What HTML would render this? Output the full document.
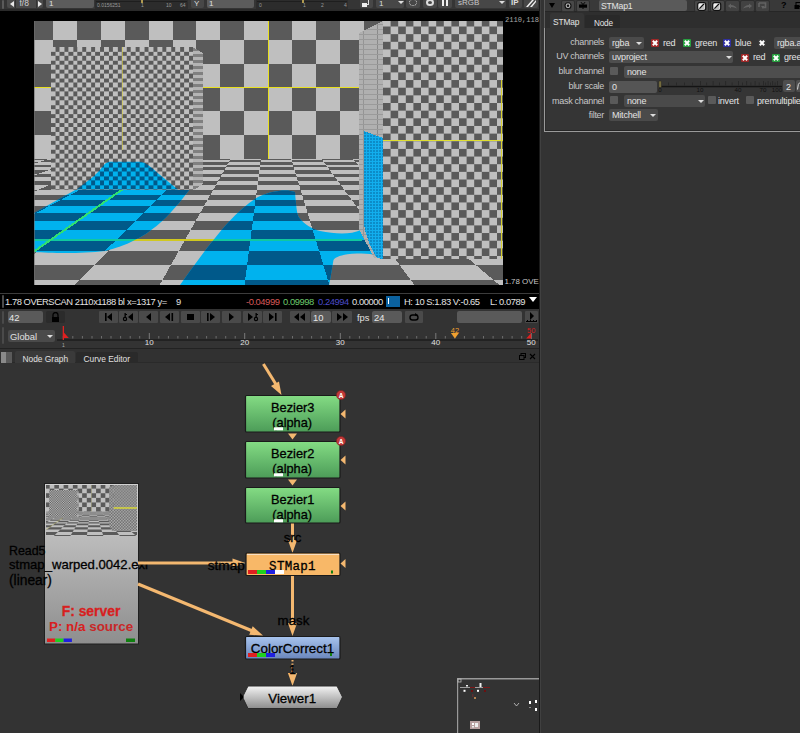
<!DOCTYPE html>
<html><head><meta charset="utf-8">
<style>
*{box-sizing:border-box;margin:0;padding:0}
html,body{width:800px;height:733px;overflow:hidden;background:#333;font-family:"Liberation Sans",sans-serif;color:#ddd}
.a{position:absolute}
.t{position:absolute;white-space:nowrap;line-height:1}
.tb{position:absolute;background:#474747;border-radius:2px}
.in{position:absolute;background:#5a5a5a;border-radius:2px}
.pb{position:absolute;top:311px;width:19px;height:12px;background:#4a4a4a;border-radius:1px}
.pb svg{position:absolute;left:0;top:0}
.node{position:absolute;border:1px solid #1c1c1c;border-radius:1px}
.lbl{position:absolute;white-space:nowrap;line-height:1;color:#000;font-size:12px}
.ck{position:absolute;width:8px;height:8px;border-radius:1px}
.ck svg{position:absolute;left:0;top:0}
.pl{position:absolute;white-space:nowrap;line-height:1;font-size:9px;letter-spacing:-0.3px;color:#c8c8c8;text-align:right}
.dd{position:absolute;background:#4a4a4a;border-radius:2px}
.ar{position:absolute;width:0;height:0;border-left:3px solid transparent;border-right:3px solid transparent;border-top:3px solid #ddd}
</style></head>
<body>
<!-- ===== VIEWER TOOLBAR ===== -->
<div class="a" style="left:0;top:0;width:539px;height:11px;background:#353535"></div>
<div class="a" style="left:0;top:9px;width:539px;height:2px;background:#2a2a2a"></div>
<div class="a" style="left:2px;top:0;width:2px;height:9px;background:#5a5a5a;border-radius:1px"></div>
<div class="tb" style="left:7px;top:-2px;width:36px;height:10px;background:#4a4a4a"></div>
<div class="a" style="left:15px;top:-2px;width:1px;height:10px;background:#333"></div>
<div class="a" style="left:36px;top:-2px;width:1px;height:10px;background:#333"></div>
<div class="a" style="left:10px;top:1px;width:0;height:0;border-top:3px solid transparent;border-bottom:3px solid transparent;border-right:4px solid #e8e8e8"></div>
<div class="a" style="left:38px;top:1px;width:0;height:0;border-top:3px solid transparent;border-bottom:3px solid transparent;border-left:4px solid #e8e8e8"></div>
<div class="t" style="left:19.5px;top:-1px;font-size:8.5px;color:#d0d0d0">f/8</div>
<div class="in" style="left:46px;top:-2px;width:48px;height:10px;background:#5c5c5c"></div>
<div class="t" style="left:49px;top:0px;font-size:8px;color:#e0e0e0">1</div>
<div class="a" style="left:95px;top:0;width:93px;height:9px;background:#2c2c2c"></div>
<div class="a" style="left:96px;top:1px;width:91px;height:1px;background:#1e1e1e"></div>
<div class="a" style="left:141px;top:0;width:2px;height:3px;background:#b09a50"></div>
<div class="t" style="left:97px;top:3px;font-size:5px;color:#999">0.0156251</div>
<div class="t" style="left:141px;top:3px;font-size:5px;color:#999">1</div>
<div class="t" style="left:166px;top:3px;font-size:5px;color:#999">10</div>
<div class="t" style="left:180px;top:3px;font-size:5px;color:#999">64</div>
<div class="tb" style="left:191px;top:-2px;width:13px;height:10px"></div>
<div class="t" style="left:194px;top:0px;font-size:8px;color:#ddd">Y</div>
<div class="in" style="left:207px;top:-2px;width:47px;height:10px;background:#5c5c5c"></div>
<div class="t" style="left:209px;top:0px;font-size:8px;color:#e0e0e0">1</div>
<div class="a" style="left:256px;top:0;width:92px;height:9px;background:#2c2c2c"></div>
<div class="a" style="left:257px;top:1px;width:90px;height:1px;background:#1e1e1e"></div>
<div class="a" style="left:302px;top:0;width:2px;height:3px;background:#b09a50"></div>
<div class="t" style="left:259px;top:3px;font-size:5px;color:#999">0</div>
<div class="t" style="left:303px;top:3px;font-size:5px;color:#999">1</div>
<div class="t" style="left:321px;top:3px;font-size:5px;color:#999">2</div>
<div class="t" style="left:344px;top:3px;font-size:5px;color:#999">4</div>
<div class="tb" style="left:360px;top:-2px;width:13px;height:10px"></div>
<div class="a" style="left:363px;top:0px;width:6px;height:5px;border:1px solid #ddd;border-top:none;border-left:none"></div>
<div class="a" style="left:362px;top:3px;width:5px;height:4px;background:#eee"></div>
<div class="dd" style="left:376px;top:-2px;width:28px;height:10px;background:#474747"></div>
<div class="t" style="left:379px;top:0px;font-size:8px;color:#ddd">1</div>
<div class="ar" style="left:398px;top:1px;border-top-color:#ddd"></div>
<div class="tb" style="left:406px;top:-2px;width:14px;height:10px"></div>
<div class="a" style="left:409px;top:-1px;width:8px;height:7px;border:1px dotted #ccc;border-radius:50%"></div>
<div class="tb" style="left:423px;top:-2px;width:14px;height:10px"></div>
<div class="a" style="left:426px;top:-1px;width:8px;height:7px;border:2px solid #ddd;border-radius:50%"></div>
<div class="tb" style="left:438px;top:-2px;width:14px;height:10px"></div>
<div class="a" style="left:442px;top:0;width:2px;height:6px;background:#eee"></div>
<div class="a" style="left:446px;top:0;width:2px;height:6px;background:#eee"></div>
<div class="dd" style="left:455px;top:-2px;width:51px;height:10px;background:#474747"></div>
<div class="t" style="left:458px;top:-1px;font-size:8px;color:#c8c8c8">sRGB</div>
<div class="ar" style="left:499px;top:1px"></div>
<div class="tb" style="left:509px;top:-2px;width:13px;height:10px"></div>
<div class="t" style="left:511px;top:-1px;font-size:8px;color:#ddd;font-weight:bold">IP</div>
<div class="tb" style="left:524px;top:-2px;width:14px;height:10px"></div>
<svg class="a" style="left:526px;top:0" width="10" height="7"><path d="M0 7 L6 0 L8 0 L2 7Z M4 7 L10 0 L10 2 L6 7Z" fill="#eee"/></svg>


<!-- ===== VIEWER BLACK ===== -->
<div class="a" style="left:0;top:11px;width:539px;height:282px;background:#000"></div>
<div class="a" style="left:0;top:293px;width:539px;height:1px;background:#3c3c3c"></div>
<div class="a" style="left:0;top:294px;width:539px;height:15px;background:#000"></div>
<div class="a" id="img" style="left:34px;top:21px;width:469px;height:264px;overflow:hidden"><svg width="469" height="264" viewBox="0 0 469 264" shape-rendering="crispEdges"><defs>
<pattern id="vfine1" x="16.6" y="25.9" width="8.9" height="8.9" patternUnits="userSpaceOnUse">
<rect width="8.9" height="8.9" fill="#5a5a5a"/><rect width="4.45" height="4.45" fill="#bfbfbf"/><rect x="4.45" y="4.45" width="4.45" height="4.45" fill="#bfbfbf"/></pattern>
<pattern id="vfine1b" x="16.6" y="25.9" width="8.9" height="8.9" patternUnits="userSpaceOnUse">
<rect width="8.9" height="8.9" fill="#00598a"/><rect width="4.45" height="4.45" fill="#00b2ee"/><rect x="4.45" y="4.45" width="4.45" height="4.45" fill="#00b2ee"/></pattern>
<pattern id="vfine2" x="349.0" y="-2.15" width="15.2" height="15.3" patternUnits="userSpaceOnUse">
<rect width="15.2" height="15.3" fill="#5a5a5a"/><rect width="7.6" height="7.65" fill="#bfbfbf"/><rect x="7.6" y="7.65" width="7.6" height="7.65" fill="#bfbfbf"/></pattern>
<pattern id="vside1" x="0" y="0" width="10" height="6" patternUnits="userSpaceOnUse">
<rect width="10" height="6" fill="#b4b4b4"/><rect y="3" width="10" height="3" fill="#808080"/></pattern>
<pattern id="vside2" x="0" y="0" width="20" height="5" patternUnits="userSpaceOnUse">
<rect width="20" height="5" fill="#b0b0b0"/><rect x="3" width="1" height="5" fill="#8a8a8a"/><rect x="9" width="1" height="5" fill="#959595"/><rect y="3" width="20" height="1" fill="#9a9a9a"/></pattern>
<pattern id="vblueside" x="0" y="0" width="3" height="3" patternUnits="userSpaceOnUse">
<rect width="3" height="3" fill="#12aeee"/><rect width="1.5" height="1.5" fill="#0c8cc8"/></pattern>
<clipPath id="vhill"><path d="M42.5,168.5 C51.0,162.0 63.0,154.0 69.0,145.0 C72.0,141.0 74.0,140.7 78.0,140.7 L106.0,140.7 C111.0,141.0 114.0,144.0 118.0,147.0 C126.0,154.0 136.0,162.0 144.0,168.5 Z"/></clipPath>
<clipPath id="vblueL"><path d="M0.0,192.0 L43.0,168.0 L156.0,168.0 C136.0,194.0 116.0,219.0 71.0,230.0 C46.0,233.0 16.0,232.0 0.0,231.0 Z"/></clipPath>
<clipPath id="vblueR"><path d="M146.0,264.0 C171.0,229.0 198.0,191.0 224.0,176.0 C238.0,169.0 254.0,168.0 261.0,171.0 C262.0,184.0 263.0,194.0 265.0,196.5 C271.0,204.0 278.0,208.0 286.0,210.0 C301.0,213.0 316.0,214.0 327.0,209.0 L349.0,209.0 L349.0,237.0 C342.0,233.0 331.0,232.0 323.0,232.6 C311.0,233.0 302.0,235.0 299.5,239.0 L295.0,265.0 Z"/></clipPath>
</defs><rect x="0" y="0" width="469" height="264" fill="#bfbfbf"/><g fill="#5a5a5a"><rect x="-4.9" y="-5.2" width="23.9" height="23.9"/><rect x="42.9" y="-5.2" width="23.9" height="23.9"/><rect x="90.7" y="-5.2" width="23.9" height="23.9"/><rect x="138.5" y="-5.2" width="23.9" height="23.9"/><rect x="186.3" y="-5.2" width="23.9" height="23.9"/><rect x="234.1" y="-5.2" width="23.9" height="23.9"/><rect x="281.9" y="-5.2" width="23.9" height="23.9"/><rect x="329.7" y="-5.2" width="23.9" height="23.9"/><rect x="377.5" y="-5.2" width="23.9" height="23.9"/><rect x="425.3" y="-5.2" width="23.9" height="23.9"/><rect x="473.1" y="-5.2" width="23.9" height="23.9"/><rect x="19.0" y="18.7" width="23.9" height="23.9"/><rect x="66.8" y="18.7" width="23.9" height="23.9"/><rect x="114.6" y="18.7" width="23.9" height="23.9"/><rect x="162.4" y="18.7" width="23.9" height="23.9"/><rect x="210.2" y="18.7" width="23.9" height="23.9"/><rect x="258.0" y="18.7" width="23.9" height="23.9"/><rect x="305.8" y="18.7" width="23.9" height="23.9"/><rect x="353.6" y="18.7" width="23.9" height="23.9"/><rect x="401.4" y="18.7" width="23.9" height="23.9"/><rect x="449.2" y="18.7" width="23.9" height="23.9"/><rect x="-4.9" y="42.6" width="23.9" height="23.9"/><rect x="42.9" y="42.6" width="23.9" height="23.9"/><rect x="90.7" y="42.6" width="23.9" height="23.9"/><rect x="138.5" y="42.6" width="23.9" height="23.9"/><rect x="186.3" y="42.6" width="23.9" height="23.9"/><rect x="234.1" y="42.6" width="23.9" height="23.9"/><rect x="281.9" y="42.6" width="23.9" height="23.9"/><rect x="329.7" y="42.6" width="23.9" height="23.9"/><rect x="377.5" y="42.6" width="23.9" height="23.9"/><rect x="425.3" y="42.6" width="23.9" height="23.9"/><rect x="473.1" y="42.6" width="23.9" height="23.9"/><rect x="19.0" y="66.5" width="23.9" height="23.9"/><rect x="66.8" y="66.5" width="23.9" height="23.9"/><rect x="114.6" y="66.5" width="23.9" height="23.9"/><rect x="162.4" y="66.5" width="23.9" height="23.9"/><rect x="210.2" y="66.5" width="23.9" height="23.9"/><rect x="258.0" y="66.5" width="23.9" height="23.9"/><rect x="305.8" y="66.5" width="23.9" height="23.9"/><rect x="353.6" y="66.5" width="23.9" height="23.9"/><rect x="401.4" y="66.5" width="23.9" height="23.9"/><rect x="449.2" y="66.5" width="23.9" height="23.9"/><rect x="-4.9" y="90.4" width="23.9" height="23.9"/><rect x="42.9" y="90.4" width="23.9" height="23.9"/><rect x="90.7" y="90.4" width="23.9" height="23.9"/><rect x="138.5" y="90.4" width="23.9" height="23.9"/><rect x="186.3" y="90.4" width="23.9" height="23.9"/><rect x="234.1" y="90.4" width="23.9" height="23.9"/><rect x="281.9" y="90.4" width="23.9" height="23.9"/><rect x="329.7" y="90.4" width="23.9" height="23.9"/><rect x="377.5" y="90.4" width="23.9" height="23.9"/><rect x="425.3" y="90.4" width="23.9" height="23.9"/><rect x="473.1" y="90.4" width="23.9" height="23.9"/><rect x="19.0" y="114.3" width="23.9" height="23.9"/><rect x="66.8" y="114.3" width="23.9" height="23.9"/><rect x="114.6" y="114.3" width="23.9" height="23.9"/><rect x="162.4" y="114.3" width="23.9" height="23.9"/><rect x="210.2" y="114.3" width="23.9" height="23.9"/><rect x="258.0" y="114.3" width="23.9" height="23.9"/><rect x="305.8" y="114.3" width="23.9" height="23.9"/><rect x="353.6" y="114.3" width="23.9" height="23.9"/><rect x="401.4" y="114.3" width="23.9" height="23.9"/><rect x="449.2" y="114.3" width="23.9" height="23.9"/><rect x="-4.9" y="138.2" width="23.9" height="23.9"/><rect x="42.9" y="138.2" width="23.9" height="23.9"/><rect x="90.7" y="138.2" width="23.9" height="23.9"/><rect x="138.5" y="138.2" width="23.9" height="23.9"/><rect x="186.3" y="138.2" width="23.9" height="23.9"/><rect x="234.1" y="138.2" width="23.9" height="23.9"/><rect x="281.9" y="138.2" width="23.9" height="23.9"/><rect x="329.7" y="138.2" width="23.9" height="23.9"/><rect x="377.5" y="138.2" width="23.9" height="23.9"/><rect x="425.3" y="138.2" width="23.9" height="23.9"/><rect x="473.1" y="138.2" width="23.9" height="23.9"/></g><rect x="0" y="138.0" width="469" height="264" fill="#bfbfbf"/><g fill="#5a5a5a"><polygon points="-25.2,330.2 88.3,330.2 104.6,301.4 3.5,301.4"/><polygon points="201.9,330.2 315.5,330.2 306.8,301.4 205.7,301.4"/><polygon points="429.1,330.2 542.7,330.2 509.0,301.4 407.9,301.4"/><polygon points="-97.6,301.4 3.5,301.4 26.5,278.2 -64.6,278.2"/><polygon points="104.6,301.4 205.7,301.4 208.7,278.2 117.6,278.2"/><polygon points="306.8,301.4 407.9,301.4 390.9,278.2 299.8,278.2"/><polygon points="26.5,278.2 117.6,278.2 128.3,259.3 45.4,259.3"/><polygon points="208.7,278.2 299.8,278.2 294.0,259.3 211.1,259.3"/><polygon points="390.9,278.2 481.9,278.2 459.8,259.3 376.9,259.3"/><polygon points="-37.5,259.3 45.4,259.3 61.1,243.5 -14.9,243.5"/><polygon points="128.3,259.3 211.1,259.3 213.2,243.5 137.2,243.5"/><polygon points="294.0,259.3 376.9,259.3 365.3,243.5 289.2,243.5"/><polygon points="459.8,259.3 542.7,259.3 517.3,243.5 441.3,243.5"/><polygon points="-90.9,243.5 -14.9,243.5 4.2,230.1 -66.0,230.1"/><polygon points="61.1,243.5 137.2,243.5 144.7,230.1 74.5,230.1"/><polygon points="213.2,243.5 289.2,243.5 285.2,230.1 214.9,230.1"/><polygon points="365.3,243.5 441.3,243.5 425.6,230.1 355.4,230.1"/><polygon points="4.2,230.1 74.5,230.1 85.9,218.6 20.7,218.6"/><polygon points="144.7,230.1 214.9,230.1 216.4,218.6 151.2,218.6"/><polygon points="285.2,230.1 355.4,230.1 346.9,218.6 281.7,218.6"/><polygon points="425.6,230.1 495.8,230.1 477.4,218.6 412.2,218.6"/><polygon points="-44.6,218.6 20.7,218.6 34.9,208.6 -26.0,208.6"/><polygon points="85.9,218.6 151.2,218.6 156.8,208.6 95.9,208.6"/><polygon points="216.4,218.6 281.7,218.6 278.6,208.6 217.7,208.6"/><polygon points="346.9,218.6 412.2,218.6 400.5,208.6 339.6,208.6"/><polygon points="477.4,218.6 542.7,218.6 522.4,208.6 461.4,208.6"/><polygon points="34.9,208.6 95.9,208.6 104.6,199.9 47.4,199.9"/><polygon points="156.8,208.6 217.7,208.6 218.9,199.9 161.7,199.9"/><polygon points="278.6,208.6 339.6,208.6 333.1,199.9 276.0,199.9"/><polygon points="400.5,208.6 461.4,208.6 447.4,199.9 390.3,199.9"/><polygon points="-9.7,199.9 47.4,199.9 58.5,192.2 4.7,192.2"/><polygon points="104.6,199.9 161.7,199.9 166.1,192.2 112.3,192.2"/><polygon points="218.9,199.9 276.0,199.9 273.7,192.2 219.9,192.2"/><polygon points="333.1,199.9 390.3,199.9 381.3,192.2 327.5,192.2"/><polygon points="447.4,199.9 504.6,199.9 488.9,192.2 435.1,192.2"/><polygon points="-49.1,192.2 4.7,192.2 17.4,185.3 -33.4,185.3"/><polygon points="58.5,192.2 112.3,192.2 119.1,185.3 68.3,185.3"/><polygon points="166.1,192.2 219.9,192.2 220.8,185.3 169.9,185.3"/><polygon points="273.7,192.2 327.5,192.2 322.4,185.3 271.6,185.3"/><polygon points="381.3,192.2 435.1,192.2 424.1,185.3 373.2,185.3"/><polygon points="17.4,185.3 68.3,185.3 77.0,179.2 28.9,179.2"/><polygon points="119.1,185.3 169.9,185.3 173.4,179.2 125.2,179.2"/><polygon points="220.8,185.3 271.6,185.3 269.7,179.2 221.5,179.2"/><polygon points="322.4,185.3 373.2,185.3 366.1,179.2 317.9,179.2"/><polygon points="424.1,185.3 474.9,185.3 462.4,179.2 414.2,179.2"/><polygon points="-19.3,179.2 28.9,179.2 39.2,173.6 -6.6,173.6"/><polygon points="77.0,179.2 125.2,179.2 130.7,173.6 85.0,173.6"/><polygon points="173.4,179.2 221.5,179.2 222.3,173.6 176.5,173.6"/><polygon points="269.7,179.2 317.9,179.2 313.8,173.6 268.0,173.6"/><polygon points="366.1,179.2 414.2,179.2 405.4,173.6 359.6,173.6"/><polygon points="462.4,179.2 510.6,179.2 496.9,173.6 451.1,173.6"/><polygon points="-52.4,173.6 -6.6,173.6 4.9,168.6 -38.7,168.6"/><polygon points="39.2,173.6 85.0,173.6 92.1,168.6 48.5,168.6"/><polygon points="130.7,173.6 176.5,173.6 179.3,168.6 135.7,168.6"/><polygon points="222.3,173.6 268.0,173.6 266.5,168.6 222.9,168.6"/><polygon points="313.8,173.6 359.6,173.6 353.7,168.6 310.1,168.6"/><polygon points="405.4,173.6 451.1,173.6 440.9,168.6 397.3,168.6"/><polygon points="4.9,168.6 48.5,168.6 57.0,164.1 15.4,164.1"/><polygon points="92.1,168.6 135.7,168.6 140.3,164.1 98.6,164.1"/><polygon points="179.3,168.6 222.9,168.6 223.5,164.1 181.9,164.1"/><polygon points="266.5,168.6 310.1,168.6 306.8,164.1 265.1,164.1"/><polygon points="353.7,168.6 397.3,168.6 390.0,164.1 348.4,164.1"/><polygon points="440.9,168.6 484.5,168.6 473.3,164.1 431.7,164.1"/><polygon points="-26.3,164.1 15.4,164.1 24.9,159.9 -14.9,159.9"/><polygon points="57.0,164.1 98.6,164.1 104.6,159.9 64.7,159.9"/><polygon points="140.3,164.1 181.9,164.1 184.2,159.9 144.4,159.9"/><polygon points="223.5,164.1 265.1,164.1 263.9,159.9 224.1,159.9"/><polygon points="306.8,164.1 348.4,164.1 343.5,159.9 303.7,159.9"/><polygon points="390.0,164.1 431.7,164.1 423.2,159.9 383.4,159.9"/><polygon points="473.3,164.1 514.9,164.1 502.8,159.9 463.0,159.9"/><polygon points="24.9,159.9 64.7,159.9 71.9,156.1 33.7,156.1"/><polygon points="104.6,159.9 144.4,159.9 148.2,156.1 110.0,156.1"/><polygon points="184.2,159.9 224.1,159.9 224.5,156.1 186.4,156.1"/><polygon points="263.9,159.9 303.7,159.9 300.9,156.1 262.7,156.1"/><polygon points="343.5,159.9 383.4,159.9 377.2,156.1 339.1,156.1"/><polygon points="423.2,159.9 463.0,159.9 453.6,156.1 415.4,156.1"/><polygon points="-4.5,156.1 33.7,156.1 41.7,152.6 5.1,152.6"/><polygon points="71.9,156.1 110.0,156.1 115.0,152.6 78.4,152.6"/><polygon points="148.2,156.1 186.4,156.1 188.4,152.6 151.7,152.6"/><polygon points="224.5,156.1 262.7,156.1 261.7,152.6 225.0,152.6"/><polygon points="300.9,156.1 339.1,156.1 335.0,152.6 298.3,152.6"/><polygon points="377.2,156.1 415.4,156.1 408.3,152.6 371.6,152.6"/><polygon points="453.6,156.1 491.8,156.1 481.6,152.6 444.9,152.6"/><polygon points="-31.6,152.6 5.1,152.6 13.9,149.4 -21.3,149.4"/><polygon points="41.7,152.6 78.4,152.6 84.4,149.4 49.2,149.4"/><polygon points="115.0,152.6 151.7,152.6 154.9,149.4 119.7,149.4"/><polygon points="188.4,152.6 225.0,152.6 225.4,149.4 190.2,149.4"/><polygon points="261.7,152.6 298.3,152.6 295.9,149.4 260.7,149.4"/><polygon points="335.0,152.6 371.6,152.6 366.4,149.4 331.2,149.4"/><polygon points="408.3,152.6 444.9,152.6 436.9,149.4 401.7,149.4"/><polygon points="13.9,149.4 49.2,149.4 56.1,146.4 22.1,146.4"/><polygon points="84.4,149.4 119.7,149.4 124.0,146.4 90.0,146.4"/><polygon points="154.9,149.4 190.2,149.4 191.9,146.4 157.9,146.4"/><polygon points="225.4,149.4 260.7,149.4 259.8,146.4 225.8,146.4"/><polygon points="295.9,149.4 331.2,149.4 327.7,146.4 293.7,146.4"/><polygon points="366.4,149.4 401.7,149.4 395.6,146.4 361.6,146.4"/><polygon points="436.9,149.4 472.2,149.4 463.5,146.4 429.5,146.4"/><polygon points="-11.8,146.4 22.1,146.4 29.7,143.6 -3.0,143.6"/><polygon points="56.1,146.4 90.0,146.4 95.2,143.6 62.5,143.6"/><polygon points="124.0,146.4 157.9,146.4 160.7,143.6 128.0,143.6"/><polygon points="191.9,146.4 225.8,146.4 226.2,143.6 193.4,143.6"/><polygon points="259.8,146.4 293.7,146.4 291.7,143.6 258.9,143.6"/><polygon points="327.7,146.4 361.6,146.4 357.1,143.6 324.4,143.6"/><polygon points="395.6,146.4 429.5,146.4 422.6,143.6 389.9,143.6"/><polygon points="463.5,146.4 497.4,146.4 488.1,143.6 455.4,143.6"/><polygon points="-35.7,143.6 -3.0,143.6 5.2,141.0 -26.4,141.0"/><polygon points="29.7,143.6 62.5,143.6 68.4,141.0 36.8,141.0"/><polygon points="95.2,143.6 128.0,143.6 131.7,141.0 100.1,141.0"/><polygon points="160.7,143.6 193.4,143.6 194.9,141.0 163.3,141.0"/><polygon points="226.2,143.6 258.9,143.6 258.1,141.0 226.5,141.0"/><polygon points="291.7,143.6 324.4,143.6 321.4,141.0 289.7,141.0"/><polygon points="357.1,143.6 389.9,143.6 384.6,141.0 353.0,141.0"/><polygon points="422.6,143.6 455.4,143.6 447.8,141.0 416.2,141.0"/><polygon points="5.2,141.0 36.8,141.0 43.4,138.5 12.9,138.5"/><polygon points="68.4,141.0 100.1,141.0 104.6,138.5 74.0,138.5"/><polygon points="131.7,141.0 163.3,141.0 165.7,138.5 135.1,138.5"/><polygon points="194.9,141.0 226.5,141.0 226.8,138.5 196.3,138.5"/><polygon points="258.1,141.0 289.7,141.0 288.0,138.5 257.4,138.5"/><polygon points="321.4,141.0 353.0,141.0 349.1,138.5 318.5,138.5"/><polygon points="384.6,141.0 416.2,141.0 410.2,138.5 379.7,138.5"/><polygon points="447.8,141.0 479.4,141.0 471.3,138.5 440.8,138.5"/><polygon points="-17.7,138.5 12.9,138.5 14.6,138.0 -15.7,138.0"/><polygon points="43.4,138.5 74.0,138.5 75.3,138.0 44.9,138.0"/><polygon points="104.6,138.5 135.1,138.5 135.9,138.0 105.6,138.0"/><polygon points="165.7,138.5 196.3,138.5 196.6,138.0 166.2,138.0"/><polygon points="226.8,138.5 257.4,138.5 257.2,138.0 226.9,138.0"/><polygon points="288.0,138.5 318.5,138.5 317.9,138.0 287.6,138.0"/><polygon points="349.1,138.5 379.7,138.5 378.5,138.0 348.2,138.0"/><polygon points="410.2,138.5 440.8,138.5 439.2,138.0 408.9,138.0"/><polygon points="471.3,138.5 501.9,138.5 499.8,138.0 469.5,138.0"/></g><g clip-path="url(#vblueL)"><rect x="0" y="138.0" width="469" height="264" fill="#00b2ee"/><g fill="#00598a"><polygon points="-95.0,243.5 -18.9,243.5 0.5,230.1 -69.7,230.1"/><polygon points="57.1,243.5 133.1,243.5 141.0,230.1 70.8,230.1"/><polygon points="0.5,230.1 70.8,230.1 82.5,218.6 17.2,218.6"/><polygon points="141.0,230.1 211.2,230.1 213.0,218.6 147.7,218.6"/><polygon points="-48.0,218.6 17.2,218.6 31.7,208.6 -29.2,208.6"/><polygon points="82.5,218.6 147.7,218.6 153.6,208.6 92.6,208.6"/><polygon points="31.7,208.6 92.6,208.6 101.5,199.9 44.4,199.9"/><polygon points="153.6,208.6 214.5,208.6 215.8,199.9 158.7,199.9"/><polygon points="-12.7,199.9 44.4,199.9 55.6,192.2 1.8,192.2"/><polygon points="101.5,199.9 158.7,199.9 163.2,192.2 109.4,192.2"/><polygon points="-52.0,192.2 1.8,192.2 14.7,185.3 -36.1,185.3"/><polygon points="55.6,192.2 109.4,192.2 116.4,185.3 65.6,185.3"/><polygon points="14.7,185.3 65.6,185.3 74.5,179.2 26.3,179.2"/><polygon points="116.4,185.3 167.2,185.3 170.8,179.2 122.7,179.2"/><polygon points="-21.8,179.2 26.3,179.2 36.8,173.6 -9.0,173.6"/><polygon points="74.5,179.2 122.7,179.2 128.3,173.6 82.5,173.6"/><polygon points="-54.8,173.6 -9.0,173.6 2.6,168.6 -41.0,168.6"/><polygon points="36.8,173.6 82.5,173.6 89.8,168.6 46.2,168.6"/><polygon points="128.3,173.6 174.1,173.6 177.0,168.6 133.4,168.6"/><polygon points="2.6,168.6 46.2,168.6 54.8,164.1 13.2,164.1"/><polygon points="89.8,168.6 133.4,168.6 138.0,164.1 96.4,164.1"/><polygon points="-28.5,164.1 13.2,164.1 22.8,159.9 -17.0,159.9"/><polygon points="54.8,164.1 96.4,164.1 102.5,159.9 62.6,159.9"/><polygon points="138.0,164.1 179.7,164.1 182.1,159.9 142.3,159.9"/><polygon points="22.8,159.9 62.6,159.9 69.8,156.1 31.7,156.1"/><polygon points="102.5,159.9 142.3,159.9 146.2,156.1 108.0,156.1"/><polygon points="-6.5,156.1 31.7,156.1 39.8,152.6 3.1,152.6"/><polygon points="69.8,156.1 108.0,156.1 113.1,152.6 76.4,152.6"/><polygon points="146.2,156.1 184.4,156.1 186.4,152.6 149.8,152.6"/><polygon points="-33.5,152.6 3.1,152.6 12.1,149.4 -23.2,149.4"/><polygon points="39.8,152.6 76.4,152.6 82.6,149.4 47.3,149.4"/><polygon points="113.1,152.6 149.8,152.6 153.1,149.4 117.8,149.4"/><polygon points="12.1,149.4 47.3,149.4 54.3,146.4 20.3,146.4"/><polygon points="82.6,149.4 117.8,149.4 122.2,146.4 88.2,146.4"/><polygon points="153.1,149.4 188.3,149.4 190.1,146.4 156.1,146.4"/><polygon points="-13.6,146.4 20.3,146.4 28.0,143.6 -4.7,143.6"/><polygon points="54.3,146.4 88.2,146.4 93.5,143.6 60.7,143.6"/><polygon points="122.2,146.4 156.1,146.4 159.0,143.6 126.2,143.6"/><polygon points="-37.5,143.6 -4.7,143.6 3.5,141.0 -28.1,141.0"/><polygon points="28.0,143.6 60.7,143.6 66.8,141.0 35.1,141.0"/><polygon points="93.5,143.6 126.2,143.6 130.0,141.0 98.4,141.0"/><polygon points="159.0,143.6 191.7,143.6 193.2,141.0 161.6,141.0"/><polygon points="3.5,141.0 35.1,141.0 41.8,138.5 11.3,138.5"/><polygon points="66.8,141.0 98.4,141.0 103.0,138.5 72.4,138.5"/><polygon points="130.0,141.0 161.6,141.0 164.1,138.5 133.5,138.5"/></g></g><g clip-path="url(#vblueR)"><rect x="0" y="138.0" width="469" height="264" fill="#00b2ee"/><g fill="#00598a"><polygon points="208.7,278.2 299.8,278.2 294.0,259.3 211.1,259.3"/><polygon points="128.3,259.3 211.1,259.3 213.2,243.5 137.2,243.5"/><polygon points="294.0,259.3 376.9,259.3 365.3,243.5 289.2,243.5"/><polygon points="61.1,243.5 137.2,243.5 144.7,230.1 74.5,230.1"/><polygon points="213.2,243.5 289.2,243.5 285.2,230.1 214.9,230.1"/><polygon points="144.7,230.1 214.9,230.1 216.4,218.6 151.2,218.6"/><polygon points="285.2,230.1 355.4,230.1 346.9,218.6 281.7,218.6"/><polygon points="85.9,218.6 151.2,218.6 156.8,208.6 95.9,208.6"/><polygon points="216.4,218.6 281.7,218.6 278.6,208.6 217.7,208.6"/><polygon points="346.9,218.6 412.2,218.6 400.5,208.6 339.6,208.6"/><polygon points="156.8,208.6 217.7,208.6 218.9,199.9 161.7,199.9"/><polygon points="278.6,208.6 339.6,208.6 333.1,199.9 276.0,199.9"/><polygon points="104.6,199.9 161.7,199.9 166.1,192.2 112.3,192.2"/><polygon points="218.9,199.9 276.0,199.9 273.7,192.2 219.9,192.2"/><polygon points="333.1,199.9 390.3,199.9 381.3,192.2 327.5,192.2"/><polygon points="166.1,192.2 219.9,192.2 220.8,185.3 169.9,185.3"/><polygon points="273.7,192.2 327.5,192.2 322.4,185.3 271.6,185.3"/><polygon points="119.1,185.3 169.9,185.3 173.4,179.2 125.2,179.2"/><polygon points="220.8,185.3 271.6,185.3 269.7,179.2 221.5,179.2"/><polygon points="322.4,185.3 373.2,185.3 366.1,179.2 317.9,179.2"/><polygon points="173.4,179.2 221.5,179.2 222.3,173.6 176.5,173.6"/><polygon points="269.7,179.2 317.9,179.2 313.8,173.6 268.0,173.6"/><polygon points="130.7,173.6 176.5,173.6 179.3,168.6 135.7,168.6"/><polygon points="222.3,173.6 268.0,173.6 266.5,168.6 222.9,168.6"/><polygon points="313.8,173.6 359.6,173.6 353.7,168.6 310.1,168.6"/><polygon points="179.3,168.6 222.9,168.6 223.5,164.1 181.9,164.1"/><polygon points="266.5,168.6 310.1,168.6 306.8,164.1 265.1,164.1"/><polygon points="140.3,164.1 181.9,164.1 184.2,159.9 144.4,159.9"/><polygon points="223.5,164.1 265.1,164.1 263.9,159.9 224.1,159.9"/><polygon points="306.8,164.1 348.4,164.1 343.5,159.9 303.7,159.9"/></g></g><line x1="0" y1="219" x2="328" y2="219" stroke="#d0c820" stroke-width="1.3"/><g clip-path="url(#vblueL)"><line x1="0" y1="219" x2="328" y2="219" stroke="#10c8a0" stroke-width="1.5"/></g><g clip-path="url(#vblueR)"><line x1="0" y1="219" x2="328" y2="219" stroke="#10c8a0" stroke-width="1.5"/></g><line x1="0" y1="230.5" x2="89" y2="168" stroke="#30e070" stroke-width="2"/><line x1="0" y1="66.5" x2="328" y2="66.5" stroke="#e8e020" stroke-width="1.5"/><line x1="234.5" y1="0" x2="234.5" y2="137.5" stroke="#e8e020" stroke-width="1.5"/><rect x="16.6" y="25.9" width="143.4" height="143.1" fill="url(#vfine1)"/><polygon points="159.0,26.0 169.0,32.0 169.0,163.0 159.0,169.5" fill="url(#vside1)"/><line x1="88" y1="26" x2="88" y2="129" stroke="#d8d040" stroke-width="1" opacity="0.6"/><g clip-path="url(#vhill)"><rect x="16.6" y="25.9" width="143.4" height="143.1" fill="url(#vfine1b)"/></g><rect x="349.0" y="0" width="120.0" height="238.0" fill="url(#vfine2)"/><path d="M325.0,12.0 L349.0,0.0 L349.0,238.0 L340.0,237.0 L325.0,208.0 Z" fill="url(#vside2)"/><path d="M330.0,110.0 L349.0,117.0 L349.0,238.0 L343.0,237.0 C338.0,229.0 332.0,217.0 330.0,204.0 Z" fill="url(#vblueside)"/><line x1="349.0" y1="119" x2="469" y2="119" stroke="#e0e030" stroke-width="1"/><line x1="467.5" y1="59" x2="467.5" y2="238" stroke="#d8d030" stroke-width="1"/><rect x="0" y="0" width="1" height="264" fill="#707070" opacity="0.6"/></svg></div>
<div class="a" style="left:2px;top:295px;width:2px;height:13px;background:#4a4a4a;border-radius:1px"></div>
<div class="t" style="left:5px;top:297px;font-size:9.4px;letter-spacing:-0.45px;color:#e4e4e4">1.78 OVERSCAN 2110x1188 bl</div>
<div class="t" style="left:127px;top:297px;font-size:9.4px;letter-spacing:-0.45px;color:#e4e4e4">x=1317 y=</div>
<div class="t" style="left:176px;top:297px;font-size:9.4px;letter-spacing:-0.45px;color:#e4e4e4">9</div>
<div class="t" style="left:246px;top:297px;font-size:9.4px;letter-spacing:-0.45px;color:#d85858">-0.04999</div>
<div class="t" style="left:283px;top:297px;font-size:9.4px;letter-spacing:-0.45px;color:#6cc86c">0.09998</div>
<div class="t" style="left:318px;top:297px;font-size:9.4px;letter-spacing:-0.45px;color:#4a4ac8">0.24994</div>
<div class="t" style="left:352px;top:297px;font-size:9.4px;letter-spacing:-0.45px;color:#e4e4e4">0.00000</div>
<div class="a" style="left:386px;top:296px;width:13.5px;height:11px;background:#0b62a0"></div>
<div class="a" style="left:388px;top:298px;width:1px;height:6px;background:#fff"></div>
<div class="t" style="left:404px;top:297px;font-size:9.4px;letter-spacing:-0.45px;color:#e4e4e4">H: 10 S:1.83 V:-0.65</div>
<div class="t" style="left:490px;top:297px;font-size:9.4px;letter-spacing:-0.45px;color:#e4e4e4">L: 0.0789</div>
<div class="a" style="left:529px;top:297px;width:0;height:0;border-left:4px solid transparent;border-right:4px solid transparent;border-top:5px solid #fff"></div>
<div class="t" style="left:505px;top:17px;font-size:7.1px;font-family:'Liberation Mono',monospace;color:#a8a8a8">2110,118</div>
<div class="t" style="left:504.5px;top:278px;font-size:7.9px;color:#c8c8c8">1.78 OVE</div>


<!-- ===== PLAYBACK + TIMELINE ===== -->
<div class="a" style="left:2px;top:311px;width:2px;height:13px;background:#4a4a4a;border-radius:1px"></div>
<div class="a" style="left:2px;top:327px;width:2px;height:17px;background:#4a4a4a;border-radius:1px"></div>
<div class="in" style="left:8px;top:311px;width:35px;height:12px;background:#5a5a5a"></div>
<div class="t" style="left:9px;top:313px;font-size:9.4px;color:#e8e8e8">42</div>
<div class="a" style="left:46px;top:311px;width:19px;height:12px;background:#2b2b2b;border-radius:2px"></div>
<svg class="a" style="left:51px;top:312px" width="9" height="10"><path d="M2 5 V3 A2.5 2.5 0 0 1 7 3 V5" fill="none" stroke="#000" stroke-width="1.3"/><rect x="1" y="5" width="7" height="5" fill="#000"/></svg>
<!-- transport -->
<div class="pb" style="left:99px"><svg width="19" height="12"><rect x="6" y="2" width="1.6" height="8" fill="#000"/><path d="M13 2 L8 6 L13 10Z" fill="#000"/></svg></div>
<div class="pb" style="left:119px"><svg width="19" height="12"><circle cx="6" cy="8" r="1.6" fill="none" stroke="#000" stroke-width="1.2"/><rect x="5.5" y="2" width="1.3" height="5" fill="#000"/><rect x="6" y="3" width="2" height="1" fill="#000"/><path d="M14 2 L9 6 L14 10Z" fill="#000"/></svg></div>
<div class="pb" style="left:139px"><svg width="19" height="12"><path d="M12 2 L7 6 L12 10Z" fill="#000"/></svg></div>
<div class="pb" style="left:160px"><svg width="19" height="12"><path d="M10 2 L5 6 L10 10Z" fill="#000"/><rect x="11.5" y="2" width="1.6" height="8" fill="#000"/></svg></div>
<div class="pb" style="left:181px"><svg width="19" height="12"><rect x="6" y="3" width="7" height="6" fill="#000"/></svg></div>
<div class="pb" style="left:201px"><svg width="19" height="12"><rect x="6" y="2" width="1.6" height="8" fill="#000"/><path d="M9 2 L14 6 L9 10Z" fill="#000"/></svg></div>
<div class="pb" style="left:222px"><svg width="19" height="12"><path d="M7 2 L12 6 L7 10Z" fill="#000"/></svg></div>
<div class="pb" style="left:243px"><svg width="19" height="12"><path d="M5 2 L10 6 L5 10Z" fill="#000"/><circle cx="13" cy="8" r="1.6" fill="none" stroke="#000" stroke-width="1.2"/><rect x="12.5" y="2" width="1.3" height="5" fill="#000"/><rect x="13" y="3" width="2" height="1" fill="#000"/></svg></div>
<div class="pb" style="left:263px"><svg width="19" height="12"><path d="M6 2 L11 6 L6 10Z" fill="#000"/><rect x="12" y="2" width="1.6" height="8" fill="#000"/></svg></div>
<div class="pb" style="left:290px;width:20px"><svg width="20" height="12"><path d="M9 2 L4 6 L9 10Z M15 2 L10 6 L15 10Z" fill="#000"/></svg></div>
<div class="in" style="left:311px;top:311px;width:20px;height:12px;background:#5a5a5a"></div>
<div class="t" style="left:313px;top:313px;font-size:9.4px;color:#e8e8e8">10</div>
<div class="pb" style="left:332px;width:20px"><svg width="20" height="12"><path d="M5 2 L10 6 L5 10Z M11 2 L16 6 L11 10Z" fill="#000"/></svg></div>
<div class="t" style="left:357px;top:313px;font-size:9.4px;color:#e0e0e0">fps</div>
<div class="in" style="left:372px;top:311px;width:30px;height:12px;background:#5a5a5a"></div>
<div class="t" style="left:374px;top:313px;font-size:9.4px;color:#e8e8e8">24</div>
<div class="pb" style="left:405px;width:18px"><svg width="18" height="12"><rect x="5" y="4" width="8" height="5" rx="2.5" fill="none" stroke="#000" stroke-width="1.4"/><path d="M10 2 L13 4 L10 5Z" fill="#000"/></svg></div>
<div class="in" style="left:457px;top:311px;width:65px;height:12px;background:#5a5a5a"></div>
<div class="pb" style="left:525px;width:13px"><svg width="13" height="12"><path d="M5 1 L9 5 L5 9Z" fill="#000"/><rect x="1" y="10" width="11" height="1" fill="#000"/><rect x="2" y="9" width="1" height="1" fill="#000"/><rect x="5" y="9" width="1" height="1" fill="#000"/><rect x="8" y="9" width="1" height="1" fill="#000"/><rect x="11" y="9" width="1" height="1" fill="#000"/></svg></div>
<!-- timeline -->
<div class="dd" style="left:8px;top:330px;width:47px;height:12px;background:#4a4a4a"></div>
<div class="t" style="left:10px;top:332px;font-size:9.4px;color:#e0e0e0">Global</div>
<div class="ar" style="left:47px;top:335px"></div>
<div class="a" style="left:57px;top:339px;width:481px;height:1.5px;background:#222"></div>
<svg class="a" style="left:57px;top:326px" width="481" height="22"><rect x="5.8" y="10" width="1" height="2.5" fill="#6e6e6e"/><rect x="15.3" y="10" width="1" height="2.5" fill="#6e6e6e"/><rect x="24.9" y="10" width="1" height="2.5" fill="#6e6e6e"/><rect x="34.5" y="10" width="1" height="2.5" fill="#6e6e6e"/><rect x="44.0" y="10" width="1" height="2.5" fill="#6e6e6e"/><rect x="53.5" y="10" width="1" height="2.5" fill="#6e6e6e"/><rect x="63.1" y="10" width="1" height="2.5" fill="#6e6e6e"/><rect x="72.7" y="10" width="1" height="2.5" fill="#6e6e6e"/><rect x="82.2" y="10" width="1" height="2.5" fill="#6e6e6e"/><rect x="91.8" y="7" width="1" height="6" fill="#7a7a7a"/><rect x="101.3" y="10" width="1" height="2.5" fill="#6e6e6e"/><rect x="110.9" y="10" width="1" height="2.5" fill="#6e6e6e"/><rect x="120.4" y="10" width="1" height="2.5" fill="#6e6e6e"/><rect x="129.9" y="10" width="1" height="2.5" fill="#6e6e6e"/><rect x="139.5" y="10" width="1" height="2.5" fill="#6e6e6e"/><rect x="149.1" y="10" width="1" height="2.5" fill="#6e6e6e"/><rect x="158.6" y="10" width="1" height="2.5" fill="#6e6e6e"/><rect x="168.2" y="10" width="1" height="2.5" fill="#6e6e6e"/><rect x="177.7" y="10" width="1" height="2.5" fill="#6e6e6e"/><rect x="187.2" y="7" width="1" height="6" fill="#7a7a7a"/><rect x="196.8" y="10" width="1" height="2.5" fill="#6e6e6e"/><rect x="206.4" y="10" width="1" height="2.5" fill="#6e6e6e"/><rect x="215.9" y="10" width="1" height="2.5" fill="#6e6e6e"/><rect x="225.4" y="10" width="1" height="2.5" fill="#6e6e6e"/><rect x="235.0" y="10" width="1" height="2.5" fill="#6e6e6e"/><rect x="244.6" y="10" width="1" height="2.5" fill="#6e6e6e"/><rect x="254.1" y="10" width="1" height="2.5" fill="#6e6e6e"/><rect x="263.7" y="10" width="1" height="2.5" fill="#6e6e6e"/><rect x="273.2" y="10" width="1" height="2.5" fill="#6e6e6e"/><rect x="282.8" y="7" width="1" height="6" fill="#7a7a7a"/><rect x="292.3" y="10" width="1" height="2.5" fill="#6e6e6e"/><rect x="301.9" y="10" width="1" height="2.5" fill="#6e6e6e"/><rect x="311.4" y="10" width="1" height="2.5" fill="#6e6e6e"/><rect x="321.0" y="10" width="1" height="2.5" fill="#6e6e6e"/><rect x="330.5" y="10" width="1" height="2.5" fill="#6e6e6e"/><rect x="340.1" y="10" width="1" height="2.5" fill="#6e6e6e"/><rect x="349.6" y="10" width="1" height="2.5" fill="#6e6e6e"/><rect x="359.2" y="10" width="1" height="2.5" fill="#6e6e6e"/><rect x="368.7" y="10" width="1" height="2.5" fill="#6e6e6e"/><rect x="378.3" y="7" width="1" height="6" fill="#7a7a7a"/><rect x="387.8" y="10" width="1" height="2.5" fill="#6e6e6e"/><rect x="397.4" y="10" width="1" height="2.5" fill="#6e6e6e"/><rect x="406.9" y="10" width="1" height="2.5" fill="#6e6e6e"/><rect x="416.5" y="10" width="1" height="2.5" fill="#6e6e6e"/><rect x="426.0" y="10" width="1" height="2.5" fill="#6e6e6e"/><rect x="435.6" y="10" width="1" height="2.5" fill="#6e6e6e"/><rect x="445.1" y="10" width="1" height="2.5" fill="#6e6e6e"/><rect x="454.6" y="10" width="1" height="2.5" fill="#6e6e6e"/><rect x="464.2" y="10" width="1" height="2.5" fill="#6e6e6e"/><rect x="473.8" y="7" width="1" height="6" fill="#7a7a7a"/><text x="92.2" y="19.2" font-size="8" fill="#e0e0e0" text-anchor="middle" font-family="Liberation Sans">10</text><text x="187.8" y="19.2" font-size="8" fill="#e0e0e0" text-anchor="middle" font-family="Liberation Sans">20</text><text x="283.3" y="19.2" font-size="8" fill="#e0e0e0" text-anchor="middle" font-family="Liberation Sans">30</text><text x="378.8" y="19.2" font-size="8" fill="#e0e0e0" text-anchor="middle" font-family="Liberation Sans">40</text><text x="474.2" y="19.2" font-size="8" fill="#e0e0e0" text-anchor="middle" font-family="Liberation Sans">50</text><rect x="5.7" y="0" width="1.3" height="14" fill="#e02020"/><path d="M6.9 6.5 L11.8 12 L6.9 12Z" fill="#e02020"/><text x="6.3" y="20.5" font-size="5" fill="#aaa" text-anchor="middle" font-family="Liberation Sans">1</text><path d="M393.9 7 L401.9 7 L397.9 12.5Z" fill="#f0a030"/><text x="397.9" y="7" font-size="7.5" fill="#f0a030" text-anchor="middle" font-family="Liberation Sans">42</text><path d="M474.2 7 L474.2 12.5 L469.2 12.5Z" fill="#e02020"/><text x="474.2" y="7" font-size="7.5" fill="#d02020" text-anchor="middle" font-family="Liberation Sans">50</text></svg>


<!-- ===== DIVIDER ===== -->
<div class="a" style="left:539px;top:0;width:1px;height:733px;background:#1a1a1a"></div><div class="a" style="left:540px;top:0;width:1px;height:733px;background:#404040"></div>

<!-- ===== PROPERTIES ===== -->
<div class="a" style="left:541px;top:0;width:259px;height:733px;background:#333"></div>
<!-- header -->
<div class="a" style="left:545px;top:0;width:255px;height:12px;background:#393939"></div>
<div class="a" style="left:545px;top:11px;width:255px;height:1px;background:#262626"></div>
<div class="a" style="left:549px;top:3px;width:0;height:0;border-left:3px solid transparent;border-right:3px solid transparent;border-top:5px solid #000"></div>
<div class="tb" style="left:560.5px;top:0;width:14.5px;height:11.5px;background:#484848;border:1px solid #2e2e2e"></div>
<svg class="a" style="left:563px;top:1px" width="10" height="10"><circle cx="5" cy="4.7" r="3" fill="#b0b0b0" stroke="#111" stroke-width="1.1"/><circle cx="5" cy="4.7" r="1.2" fill="#111"/></svg>
<div class="tb" style="left:575.5px;top:0;width:14.5px;height:11.5px;background:#484848;border:1px solid #2e2e2e"></div>
<svg class="a" style="left:577px;top:1px" width="12" height="10"><path d="M4 1.2 L6 3.6 L8 1.2" fill="none" stroke="#000" stroke-width="1"/><rect x="2" y="3.5" width="8" height="3.2" fill="#000"/><rect x="5.5" y="6.5" width="1" height="1.5" fill="#000"/></svg>
<div class="in" style="left:599px;top:0;width:88px;height:11px;background:#5a5a5a"></div>
<div class="t" style="left:601px;top:1.5px;font-size:8.7px;letter-spacing:-0.25px;color:#e4e4e4">STMap1</div>
<div class="tb" style="left:694px;top:0;width:15px;height:11.5px;background:#484848;border:1px solid #2e2e2e"></div>
<svg class="a" style="left:696.5px;top:1.5px" width="10" height="9"><rect x="0.7" y="0.7" width="8" height="7.6" rx="2" fill="#f0f0f0" stroke="#111" stroke-width="1.2"/><path d="M2.5 6.8 L7 2" stroke="#111" stroke-width="1.5"/><path d="M7.5 2.5 V7.5 H2.5Z" fill="#bbb"/></svg>
<div class="tb" style="left:709.5px;top:0;width:15px;height:11.5px;background:#484848;border:1px solid #2e2e2e"></div>
<svg class="a" style="left:712px;top:1.5px" width="10" height="9"><rect x="0.7" y="0.7" width="8" height="7.6" rx="2" fill="#f0f0f0" stroke="#111" stroke-width="1.2"/><path d="M2.5 6.8 L7 2" stroke="#111" stroke-width="1.5"/><path d="M7.5 2.5 V7.5 H2.5Z" fill="#bbb"/></svg>
<div class="tb" style="left:725px;top:0;width:15px;height:11.5px;background:#424242;border:1px solid #2e2e2e"></div>
<svg class="a" style="left:727px;top:2px" width="11" height="8"><path d="M1 4 L4 1.5 V3 Q8 3 10 6.5 Q7 4.8 4 5 V6.5Z" fill="#626262"/></svg>
<div class="tb" style="left:740px;top:0;width:15px;height:11.5px;background:#424242;border:1px solid #2e2e2e"></div>
<svg class="a" style="left:742px;top:2px" width="11" height="8"><path d="M10 4 L7 1.5 V3 Q3 3 1 6.5 Q4 4.8 7 5 V6.5Z" fill="#626262"/></svg>
<div class="tb" style="left:755px;top:0;width:15px;height:11.5px;background:#424242;border:1px solid #2e2e2e"></div>
<svg class="a" style="left:758px;top:2px" width="9" height="9"><path d="M1 1 H7.5 V5.5 H4.5 M1 1 V5" fill="none" stroke="#626262" stroke-width="1.6"/><path d="M3 4 L5 7 L6.5 4Z" fill="#626262"/></svg>
<div class="t" style="left:781px;top:1px;font-size:9px;color:#000;font-weight:bold">?</div>
<svg class="a" style="left:794px;top:2px" width="6" height="8"><rect x="2" y="0.5" width="5" height="4" fill="none" stroke="#000"/><rect x="0.5" y="3" width="5" height="4" fill="#000"/></svg>
<!-- tabs -->
<div class="a" style="left:545px;top:12px;width:255px;height:16px;background:#2e2e2e"></div>
<div class="a" style="left:550px;top:13px;width:34px;height:16px;background:#353535;border-radius:2px 2px 0 0"></div>
<div class="a" style="left:585px;top:15px;width:35px;height:13px;background:#292929;border-radius:2px 2px 0 0"></div>
<div class="t" style="left:553px;top:17.5px;font-size:8.4px;letter-spacing:-0.15px;color:#e4e4e4">STMap</div>
<div class="t" style="left:594px;top:19.5px;font-size:8.2px;letter-spacing:-0.2px;color:#e4e4e4">Node</div>
<!-- content -->
<div class="a" style="left:545px;top:28px;width:255px;height:103px;background:#353535"></div>
<div class="a" style="left:544px;top:0;width:1px;height:28px;background:#5a5a5a"></div><div class="a" style="left:544px;top:28px;width:1px;height:104px;background:#9a9a9a"></div>
<div class="a" style="left:544px;top:131px;width:256px;height:1.2px;background:#9a9a9a"></div><div class="a" style="left:545px;top:130px;width:255px;height:1px;background:#262626"></div><div class="a" style="left:545px;top:28px;width:1px;height:102px;background:#2c2c2c"></div>
<!-- row channels -->
<div class="pl" style="right:196px;top:38px">channels</div>
<div class="dd" style="left:609px;top:37px;width:35px;height:12px"></div>
<div class="t" style="left:612px;top:39px;font-size:9px;letter-spacing:-0.2px;color:#e4e4e4">rgba</div>
<div class="ar" style="left:636px;top:42px"></div>
<div class="ck" style="left:651px;top:39px;background:#a02828"><svg width="8" height="8"><path d="M1.8 1.8 L6.2 6.2 M6.2 1.8 L1.8 6.2" stroke="#fff" stroke-width="2"/></svg></div><div class="ck" style="left:683px;top:39px;background:#28a040"><svg width="8" height="8"><path d="M1.8 1.8 L6.2 6.2 M6.2 1.8 L1.8 6.2" stroke="#fff" stroke-width="2"/></svg></div><div class="ck" style="left:723px;top:39px;background:#3030a0"><svg width="8" height="8"><path d="M1.8 1.8 L6.2 6.2 M6.2 1.8 L1.8 6.2" stroke="#fff" stroke-width="2"/></svg></div><div class="ck" style="left:758px;top:39px;background:#3a3a3a"><svg width="8" height="8"><path d="M1.8 1.8 L6.2 6.2 M6.2 1.8 L1.8 6.2" stroke="#fff" stroke-width="2"/></svg></div><div class="ck" style="left:741px;top:54px;background:#a02828"><svg width="8" height="8"><path d="M1.8 1.8 L6.2 6.2 M6.2 1.8 L1.8 6.2" stroke="#fff" stroke-width="2"/></svg></div><div class="ck" style="left:772px;top:54px;background:#28a040"><svg width="8" height="8"><path d="M1.8 1.8 L6.2 6.2 M6.2 1.8 L1.8 6.2" stroke="#fff" stroke-width="2"/></svg></div>
<div class="t" style="left:663px;top:39px;font-size:9px;letter-spacing:-0.2px;color:#e4e4e4">red</div>
<div class="t" style="left:695px;top:39px;font-size:9px;letter-spacing:-0.2px;color:#e4e4e4">green</div>
<div class="t" style="left:735px;top:39px;font-size:9px;letter-spacing:-0.2px;color:#e4e4e4">blue</div>
<div class="dd" style="left:774px;top:37px;width:30px;height:12px"></div>
<div class="t" style="left:777px;top:39px;font-size:9px;letter-spacing:-0.2px;color:#e4e4e4">rgba.alpha</div>
<!-- row UV -->
<div class="pl" style="right:196px;top:52px">UV channels</div>
<div class="dd" style="left:609px;top:51px;width:124px;height:12px;background:#4e4e4e"></div>
<div class="t" style="left:612px;top:53px;font-size:9px;letter-spacing:-0.2px;color:#e4e4e4">uvproject</div>
<div class="ar" style="left:726px;top:56px"></div>
<div class="t" style="left:753px;top:53px;font-size:9px;letter-spacing:-0.2px;color:#e4e4e4">red</div>
<div class="t" style="left:784px;top:53px;font-size:9px;letter-spacing:-0.2px;color:#e4e4e4">green</div>
<!-- row blur channel -->
<div class="pl" style="right:196px;top:67px">blur channel</div>
<div class="a" style="left:609.5px;top:67px;width:8px;height:8px;background:#5a5a5a;border-radius:1px"></div>
<div class="dd" style="left:624px;top:66px;width:180px;height:12px;background:#4e4e4e"></div>
<div class="t" style="left:627px;top:68px;font-size:9px;letter-spacing:-0.2px;color:#e4e4e4">none</div>
<!-- row blur scale -->
<div class="pl" style="right:196px;top:82px">blur scale</div>
<div class="in" style="left:609px;top:81px;width:48px;height:12px;background:#555"></div>
<div class="t" style="left:612px;top:83px;font-size:9px;letter-spacing:-0.2px;color:#e4e4e4">0</div>
<svg class="a" style="left:658px;top:78px" width="125" height="17"><rect x="1" y="7.8" width="123" height="1.5" fill="#141414"/><rect x="2.0" y="3" width="0.8" height="4.5" fill="#262626"/><rect x="10.0" y="4.5" width="0.8" height="3" fill="#262626"/><rect x="18.0" y="4.5" width="0.8" height="3" fill="#262626"/><rect x="26.0" y="4.5" width="0.8" height="3" fill="#262626"/><rect x="34.0" y="4.5" width="0.8" height="3" fill="#262626"/><rect x="42.0" y="3" width="0.8" height="4.5" fill="#262626"/><rect x="48.3" y="4.5" width="0.8" height="3" fill="#262626"/><rect x="54.7" y="3" width="0.8" height="4.5" fill="#262626"/><rect x="61.0" y="4.5" width="0.8" height="3" fill="#262626"/><rect x="67.3" y="3" width="0.8" height="4.5" fill="#262626"/><rect x="73.7" y="4.5" width="0.8" height="3" fill="#262626"/><rect x="80.0" y="3" width="0.8" height="4.5" fill="#262626"/><rect x="84.2" y="4.5" width="0.8" height="3" fill="#262626"/><rect x="88.3" y="3" width="0.8" height="4.5" fill="#262626"/><rect x="92.5" y="4.5" width="0.8" height="3" fill="#262626"/><rect x="96.7" y="3" width="0.8" height="4.5" fill="#262626"/><rect x="100.8" y="4.5" width="0.8" height="3" fill="#262626"/><rect x="105.0" y="3" width="0.8" height="4.5" fill="#262626"/><rect x="107.3" y="4.5" width="0.8" height="3" fill="#262626"/><rect x="109.7" y="3" width="0.8" height="4.5" fill="#262626"/><rect x="112.0" y="4.5" width="0.8" height="3" fill="#262626"/><rect x="114.3" y="3" width="0.8" height="4.5" fill="#262626"/><rect x="116.7" y="4.5" width="0.8" height="3" fill="#262626"/><rect x="119.0" y="3" width="0.8" height="4.5" fill="#262626"/><rect x="0.8" y="3" width="2.6" height="6.5" rx="0.8" fill="#7a7040" stroke="#222" stroke-width="0.5"/><text x="2.0" y="14" font-size="6.2" fill="#111" text-anchor="middle" font-family="Liberation Sans">0</text><text x="42.0" y="14" font-size="6.2" fill="#111" text-anchor="middle" font-family="Liberation Sans">10</text><text x="80.0" y="14" font-size="6.2" fill="#111" text-anchor="middle" font-family="Liberation Sans">40</text><text x="105.0" y="14" font-size="6.2" fill="#111" text-anchor="middle" font-family="Liberation Sans">70</text><text x="119.0" y="14" font-size="6.2" fill="#111" text-anchor="middle" font-family="Liberation Sans">100</text></svg>
<div class="tb" style="left:783px;top:80px;width:11.5px;height:12px;background:#4e4e4e"></div>
<div class="t" style="left:786px;top:83px;font-size:9px;letter-spacing:-0.2px;color:#e4e4e4">2</div>
<div class="tb" style="left:796px;top:80px;width:8px;height:12px;background:#4e4e4e"></div><svg class="a" style="left:797px;top:82px" width="3" height="8"><path d="M0.5 7.5 Q1 1 2.8 0.5" fill="none" stroke="#ddd" stroke-width="1"/></svg>
<!-- row mask channel -->
<div class="pl" style="right:196px;top:97px">mask channel</div>
<div class="a" style="left:609.5px;top:96px;width:8px;height:8px;background:#5a5a5a;border-radius:1px"></div>
<div class="dd" style="left:624px;top:95px;width:81px;height:12px"></div>
<div class="t" style="left:627px;top:97px;font-size:9px;letter-spacing:-0.2px;color:#e4e4e4">none</div>
<div class="ar" style="left:698px;top:100px"></div>
<div class="a" style="left:707.5px;top:96px;width:8px;height:8px;background:#5a5a5a;border-radius:1px"></div>
<div class="t" style="left:718px;top:97px;font-size:9px;letter-spacing:-0.2px;color:#e4e4e4">invert</div>
<div class="a" style="left:745.5px;top:96px;width:8px;height:8px;background:#5a5a5a;border-radius:1px"></div>
<div class="t" style="left:757px;top:97px;font-size:9px;letter-spacing:-0.2px;color:#e4e4e4">premultiplied</div>
<!-- row filter -->
<div class="pl" style="right:196px;top:111px">filter</div>
<div class="dd" style="left:609px;top:109px;width:49px;height:12px"></div>
<div class="t" style="left:612px;top:111px;font-size:9px;letter-spacing:-0.2px;color:#e4e4e4">Mitchell</div>
<div class="ar" style="left:650px;top:114px"></div>
<div class="a" style="left:541px;top:132px;width:259px;height:601px;background:#333"></div>


<!-- ===== NODE GRAPH ===== -->
<div class="a" style="left:0;top:348px;width:539px;height:1px;background:#222"></div>
<div class="a" style="left:0;top:349px;width:539px;height:14px;background:#313131"></div>
<div class="a" style="left:0;top:362px;width:539px;height:1px;background:#2a2a2a"></div>

<div class="a" style="left:1px;top:352px;width:11px;height:11px;background:#5a5a5a"></div>
<div class="a" style="left:1px;top:352px;width:5px;height:11px;background:#8a8a8a"></div>
<div class="a" style="left:15px;top:351px;width:60px;height:12px;background:#3a3a3a;border-radius:2px 2px 0 0"></div>
<div class="a" style="left:76px;top:352px;width:62px;height:11px;background:#2a2a2a;border-radius:2px 2px 0 0"></div>
<div class="t" style="left:22.5px;top:354.5px;font-size:8.4px;color:#e0e0e0">Node Graph</div>
<div class="t" style="left:83.5px;top:355px;font-size:8.4px;color:#e0e0e0">Curve Editor</div>
<svg class="a" style="left:519px;top:353px" width="7" height="7"><rect x="2" y="0.5" width="4.5" height="4" fill="none" stroke="#000" stroke-width="1"/><rect x="0.5" y="2.5" width="4.5" height="4" fill="#333" stroke="#000" stroke-width="1"/></svg>
<svg class="a" style="left:529px;top:353px" width="7" height="7"><path d="M1 1 L6 6 M6 1 L1 6" stroke="#000" stroke-width="1.1"/></svg>
<svg class="a" style="left:0;top:363px" width="539" height="370"><defs>
<linearGradient id="gGreen" x1="0" y1="0" x2="0" y2="1"><stop offset="0" stop-color="#84dc84"/><stop offset="1" stop-color="#4c9c58"/></linearGradient>
<linearGradient id="gBlue" x1="0" y1="0" x2="0" y2="1"><stop offset="0" stop-color="#a8c4ee"/><stop offset="1" stop-color="#6a86bc"/></linearGradient>
<linearGradient id="gGray" x1="0" y1="0" x2="0" y2="1"><stop offset="0" stop-color="#f4f4f4"/><stop offset="1" stop-color="#8c8c8c"/></linearGradient>
<linearGradient id="gRead" x1="0" y1="0" x2="0" y2="1"><stop offset="0" stop-color="#d2d2d2"/><stop offset="1" stop-color="#8e8e8e"/></linearGradient>
</defs><path d="M288.0 70.5 L297.0 70.5 L292.5 76.5Z" fill="#f4b870"/><path d="M288.0 116.5 L297.0 116.5 L292.5 122.5Z" fill="#f4b870"/><rect x="44.5" y="120.5" width="94" height="160.5" fill="url(#gRead)" stroke="#202020" stroke-width="1"/><svg x="46" y="122" width="91" height="51" viewBox="0 0 469 264" preserveAspectRatio="none" shape-rendering="geometricPrecision"><defs>
<pattern id="tfine1" x="16.6" y="25.9" width="8.9" height="8.9" patternUnits="userSpaceOnUse">
<rect width="8.9" height="8.9" fill="#5a5a5a"/><rect width="4.45" height="4.45" fill="#bfbfbf"/><rect x="4.45" y="4.45" width="4.45" height="4.45" fill="#bfbfbf"/></pattern>
<pattern id="tfine1b" x="16.6" y="25.9" width="8.9" height="8.9" patternUnits="userSpaceOnUse">
<rect width="8.9" height="8.9" fill="#00598a"/><rect width="4.45" height="4.45" fill="#00b2ee"/><rect x="4.45" y="4.45" width="4.45" height="4.45" fill="#00b2ee"/></pattern>
<pattern id="tfine2" x="349.0" y="-2.15" width="15.2" height="15.3" patternUnits="userSpaceOnUse">
<rect width="15.2" height="15.3" fill="#5a5a5a"/><rect width="7.6" height="7.65" fill="#bfbfbf"/><rect x="7.6" y="7.65" width="7.6" height="7.65" fill="#bfbfbf"/></pattern>
<pattern id="tside1" x="0" y="0" width="10" height="6" patternUnits="userSpaceOnUse">
<rect width="10" height="6" fill="#b4b4b4"/><rect y="3" width="10" height="3" fill="#808080"/></pattern>
<pattern id="tside2" x="0" y="0" width="20" height="5" patternUnits="userSpaceOnUse">
<rect width="20" height="5" fill="#b0b0b0"/><rect x="3" width="1" height="5" fill="#8a8a8a"/><rect x="9" width="1" height="5" fill="#959595"/><rect y="3" width="20" height="1" fill="#9a9a9a"/></pattern>
<pattern id="tblueside" x="0" y="0" width="3" height="3" patternUnits="userSpaceOnUse">
<rect width="3" height="3" fill="#12aeee"/><rect width="1.5" height="1.5" fill="#0c8cc8"/></pattern>
<clipPath id="thill"><path d="M42.5,168.5 C51.0,162.0 63.0,154.0 69.0,145.0 C72.0,141.0 74.0,140.7 78.0,140.7 L106.0,140.7 C111.0,141.0 114.0,144.0 118.0,147.0 C126.0,154.0 136.0,162.0 144.0,168.5 Z"/></clipPath>
<clipPath id="tblueL"><path d="M0.0,192.0 L43.0,168.0 L156.0,168.0 C136.0,194.0 116.0,219.0 71.0,230.0 C46.0,233.0 16.0,232.0 0.0,231.0 Z"/></clipPath>
<clipPath id="tblueR"><path d="M146.0,264.0 C171.0,229.0 198.0,191.0 224.0,176.0 C238.0,169.0 254.0,168.0 261.0,171.0 C262.0,184.0 263.0,194.0 265.0,196.5 C271.0,204.0 278.0,208.0 286.0,210.0 C301.0,213.0 316.0,214.0 327.0,209.0 L349.0,209.0 L349.0,237.0 C342.0,233.0 331.0,232.0 323.0,232.6 C311.0,233.0 302.0,235.0 299.5,239.0 L295.0,265.0 Z"/></clipPath>
</defs><rect x="0" y="0" width="469" height="264" fill="#bfbfbf"/><g fill="#5a5a5a"><rect x="-4.9" y="-5.2" width="23.9" height="23.9"/><rect x="42.9" y="-5.2" width="23.9" height="23.9"/><rect x="90.7" y="-5.2" width="23.9" height="23.9"/><rect x="138.5" y="-5.2" width="23.9" height="23.9"/><rect x="186.3" y="-5.2" width="23.9" height="23.9"/><rect x="234.1" y="-5.2" width="23.9" height="23.9"/><rect x="281.9" y="-5.2" width="23.9" height="23.9"/><rect x="329.7" y="-5.2" width="23.9" height="23.9"/><rect x="377.5" y="-5.2" width="23.9" height="23.9"/><rect x="425.3" y="-5.2" width="23.9" height="23.9"/><rect x="473.1" y="-5.2" width="23.9" height="23.9"/><rect x="19.0" y="18.7" width="23.9" height="23.9"/><rect x="66.8" y="18.7" width="23.9" height="23.9"/><rect x="114.6" y="18.7" width="23.9" height="23.9"/><rect x="162.4" y="18.7" width="23.9" height="23.9"/><rect x="210.2" y="18.7" width="23.9" height="23.9"/><rect x="258.0" y="18.7" width="23.9" height="23.9"/><rect x="305.8" y="18.7" width="23.9" height="23.9"/><rect x="353.6" y="18.7" width="23.9" height="23.9"/><rect x="401.4" y="18.7" width="23.9" height="23.9"/><rect x="449.2" y="18.7" width="23.9" height="23.9"/><rect x="-4.9" y="42.6" width="23.9" height="23.9"/><rect x="42.9" y="42.6" width="23.9" height="23.9"/><rect x="90.7" y="42.6" width="23.9" height="23.9"/><rect x="138.5" y="42.6" width="23.9" height="23.9"/><rect x="186.3" y="42.6" width="23.9" height="23.9"/><rect x="234.1" y="42.6" width="23.9" height="23.9"/><rect x="281.9" y="42.6" width="23.9" height="23.9"/><rect x="329.7" y="42.6" width="23.9" height="23.9"/><rect x="377.5" y="42.6" width="23.9" height="23.9"/><rect x="425.3" y="42.6" width="23.9" height="23.9"/><rect x="473.1" y="42.6" width="23.9" height="23.9"/><rect x="19.0" y="66.5" width="23.9" height="23.9"/><rect x="66.8" y="66.5" width="23.9" height="23.9"/><rect x="114.6" y="66.5" width="23.9" height="23.9"/><rect x="162.4" y="66.5" width="23.9" height="23.9"/><rect x="210.2" y="66.5" width="23.9" height="23.9"/><rect x="258.0" y="66.5" width="23.9" height="23.9"/><rect x="305.8" y="66.5" width="23.9" height="23.9"/><rect x="353.6" y="66.5" width="23.9" height="23.9"/><rect x="401.4" y="66.5" width="23.9" height="23.9"/><rect x="449.2" y="66.5" width="23.9" height="23.9"/><rect x="-4.9" y="90.4" width="23.9" height="23.9"/><rect x="42.9" y="90.4" width="23.9" height="23.9"/><rect x="90.7" y="90.4" width="23.9" height="23.9"/><rect x="138.5" y="90.4" width="23.9" height="23.9"/><rect x="186.3" y="90.4" width="23.9" height="23.9"/><rect x="234.1" y="90.4" width="23.9" height="23.9"/><rect x="281.9" y="90.4" width="23.9" height="23.9"/><rect x="329.7" y="90.4" width="23.9" height="23.9"/><rect x="377.5" y="90.4" width="23.9" height="23.9"/><rect x="425.3" y="90.4" width="23.9" height="23.9"/><rect x="473.1" y="90.4" width="23.9" height="23.9"/><rect x="19.0" y="114.3" width="23.9" height="23.9"/><rect x="66.8" y="114.3" width="23.9" height="23.9"/><rect x="114.6" y="114.3" width="23.9" height="23.9"/><rect x="162.4" y="114.3" width="23.9" height="23.9"/><rect x="210.2" y="114.3" width="23.9" height="23.9"/><rect x="258.0" y="114.3" width="23.9" height="23.9"/><rect x="305.8" y="114.3" width="23.9" height="23.9"/><rect x="353.6" y="114.3" width="23.9" height="23.9"/><rect x="401.4" y="114.3" width="23.9" height="23.9"/><rect x="449.2" y="114.3" width="23.9" height="23.9"/><rect x="-4.9" y="138.2" width="23.9" height="23.9"/><rect x="42.9" y="138.2" width="23.9" height="23.9"/><rect x="90.7" y="138.2" width="23.9" height="23.9"/><rect x="138.5" y="138.2" width="23.9" height="23.9"/><rect x="186.3" y="138.2" width="23.9" height="23.9"/><rect x="234.1" y="138.2" width="23.9" height="23.9"/><rect x="281.9" y="138.2" width="23.9" height="23.9"/><rect x="329.7" y="138.2" width="23.9" height="23.9"/><rect x="377.5" y="138.2" width="23.9" height="23.9"/><rect x="425.3" y="138.2" width="23.9" height="23.9"/><rect x="473.1" y="138.2" width="23.9" height="23.9"/></g><rect x="0" y="138.0" width="469" height="264" fill="#bfbfbf"/><g fill="#5a5a5a"><polygon points="-25.2,330.2 88.3,330.2 104.6,301.4 3.5,301.4"/><polygon points="201.9,330.2 315.5,330.2 306.8,301.4 205.7,301.4"/><polygon points="429.1,330.2 542.7,330.2 509.0,301.4 407.9,301.4"/><polygon points="-97.6,301.4 3.5,301.4 26.5,278.2 -64.6,278.2"/><polygon points="104.6,301.4 205.7,301.4 208.7,278.2 117.6,278.2"/><polygon points="306.8,301.4 407.9,301.4 390.9,278.2 299.8,278.2"/><polygon points="26.5,278.2 117.6,278.2 128.3,259.3 45.4,259.3"/><polygon points="208.7,278.2 299.8,278.2 294.0,259.3 211.1,259.3"/><polygon points="390.9,278.2 481.9,278.2 459.8,259.3 376.9,259.3"/><polygon points="-37.5,259.3 45.4,259.3 61.1,243.5 -14.9,243.5"/><polygon points="128.3,259.3 211.1,259.3 213.2,243.5 137.2,243.5"/><polygon points="294.0,259.3 376.9,259.3 365.3,243.5 289.2,243.5"/><polygon points="459.8,259.3 542.7,259.3 517.3,243.5 441.3,243.5"/><polygon points="-90.9,243.5 -14.9,243.5 4.2,230.1 -66.0,230.1"/><polygon points="61.1,243.5 137.2,243.5 144.7,230.1 74.5,230.1"/><polygon points="213.2,243.5 289.2,243.5 285.2,230.1 214.9,230.1"/><polygon points="365.3,243.5 441.3,243.5 425.6,230.1 355.4,230.1"/><polygon points="4.2,230.1 74.5,230.1 85.9,218.6 20.7,218.6"/><polygon points="144.7,230.1 214.9,230.1 216.4,218.6 151.2,218.6"/><polygon points="285.2,230.1 355.4,230.1 346.9,218.6 281.7,218.6"/><polygon points="425.6,230.1 495.8,230.1 477.4,218.6 412.2,218.6"/><polygon points="-44.6,218.6 20.7,218.6 34.9,208.6 -26.0,208.6"/><polygon points="85.9,218.6 151.2,218.6 156.8,208.6 95.9,208.6"/><polygon points="216.4,218.6 281.7,218.6 278.6,208.6 217.7,208.6"/><polygon points="346.9,218.6 412.2,218.6 400.5,208.6 339.6,208.6"/><polygon points="477.4,218.6 542.7,218.6 522.4,208.6 461.4,208.6"/><polygon points="34.9,208.6 95.9,208.6 104.6,199.9 47.4,199.9"/><polygon points="156.8,208.6 217.7,208.6 218.9,199.9 161.7,199.9"/><polygon points="278.6,208.6 339.6,208.6 333.1,199.9 276.0,199.9"/><polygon points="400.5,208.6 461.4,208.6 447.4,199.9 390.3,199.9"/><polygon points="-9.7,199.9 47.4,199.9 58.5,192.2 4.7,192.2"/><polygon points="104.6,199.9 161.7,199.9 166.1,192.2 112.3,192.2"/><polygon points="218.9,199.9 276.0,199.9 273.7,192.2 219.9,192.2"/><polygon points="333.1,199.9 390.3,199.9 381.3,192.2 327.5,192.2"/><polygon points="447.4,199.9 504.6,199.9 488.9,192.2 435.1,192.2"/><polygon points="-49.1,192.2 4.7,192.2 17.4,185.3 -33.4,185.3"/><polygon points="58.5,192.2 112.3,192.2 119.1,185.3 68.3,185.3"/><polygon points="166.1,192.2 219.9,192.2 220.8,185.3 169.9,185.3"/><polygon points="273.7,192.2 327.5,192.2 322.4,185.3 271.6,185.3"/><polygon points="381.3,192.2 435.1,192.2 424.1,185.3 373.2,185.3"/><polygon points="17.4,185.3 68.3,185.3 77.0,179.2 28.9,179.2"/><polygon points="119.1,185.3 169.9,185.3 173.4,179.2 125.2,179.2"/><polygon points="220.8,185.3 271.6,185.3 269.7,179.2 221.5,179.2"/><polygon points="322.4,185.3 373.2,185.3 366.1,179.2 317.9,179.2"/><polygon points="424.1,185.3 474.9,185.3 462.4,179.2 414.2,179.2"/><polygon points="-19.3,179.2 28.9,179.2 39.2,173.6 -6.6,173.6"/><polygon points="77.0,179.2 125.2,179.2 130.7,173.6 85.0,173.6"/><polygon points="173.4,179.2 221.5,179.2 222.3,173.6 176.5,173.6"/><polygon points="269.7,179.2 317.9,179.2 313.8,173.6 268.0,173.6"/><polygon points="366.1,179.2 414.2,179.2 405.4,173.6 359.6,173.6"/><polygon points="462.4,179.2 510.6,179.2 496.9,173.6 451.1,173.6"/><polygon points="-52.4,173.6 -6.6,173.6 4.9,168.6 -38.7,168.6"/><polygon points="39.2,173.6 85.0,173.6 92.1,168.6 48.5,168.6"/><polygon points="130.7,173.6 176.5,173.6 179.3,168.6 135.7,168.6"/><polygon points="222.3,173.6 268.0,173.6 266.5,168.6 222.9,168.6"/><polygon points="313.8,173.6 359.6,173.6 353.7,168.6 310.1,168.6"/><polygon points="405.4,173.6 451.1,173.6 440.9,168.6 397.3,168.6"/><polygon points="4.9,168.6 48.5,168.6 57.0,164.1 15.4,164.1"/><polygon points="92.1,168.6 135.7,168.6 140.3,164.1 98.6,164.1"/><polygon points="179.3,168.6 222.9,168.6 223.5,164.1 181.9,164.1"/><polygon points="266.5,168.6 310.1,168.6 306.8,164.1 265.1,164.1"/><polygon points="353.7,168.6 397.3,168.6 390.0,164.1 348.4,164.1"/><polygon points="440.9,168.6 484.5,168.6 473.3,164.1 431.7,164.1"/><polygon points="-26.3,164.1 15.4,164.1 24.9,159.9 -14.9,159.9"/><polygon points="57.0,164.1 98.6,164.1 104.6,159.9 64.7,159.9"/><polygon points="140.3,164.1 181.9,164.1 184.2,159.9 144.4,159.9"/><polygon points="223.5,164.1 265.1,164.1 263.9,159.9 224.1,159.9"/><polygon points="306.8,164.1 348.4,164.1 343.5,159.9 303.7,159.9"/><polygon points="390.0,164.1 431.7,164.1 423.2,159.9 383.4,159.9"/><polygon points="473.3,164.1 514.9,164.1 502.8,159.9 463.0,159.9"/><polygon points="24.9,159.9 64.7,159.9 71.9,156.1 33.7,156.1"/><polygon points="104.6,159.9 144.4,159.9 148.2,156.1 110.0,156.1"/><polygon points="184.2,159.9 224.1,159.9 224.5,156.1 186.4,156.1"/><polygon points="263.9,159.9 303.7,159.9 300.9,156.1 262.7,156.1"/><polygon points="343.5,159.9 383.4,159.9 377.2,156.1 339.1,156.1"/><polygon points="423.2,159.9 463.0,159.9 453.6,156.1 415.4,156.1"/><polygon points="-4.5,156.1 33.7,156.1 41.7,152.6 5.1,152.6"/><polygon points="71.9,156.1 110.0,156.1 115.0,152.6 78.4,152.6"/><polygon points="148.2,156.1 186.4,156.1 188.4,152.6 151.7,152.6"/><polygon points="224.5,156.1 262.7,156.1 261.7,152.6 225.0,152.6"/><polygon points="300.9,156.1 339.1,156.1 335.0,152.6 298.3,152.6"/><polygon points="377.2,156.1 415.4,156.1 408.3,152.6 371.6,152.6"/><polygon points="453.6,156.1 491.8,156.1 481.6,152.6 444.9,152.6"/><polygon points="-31.6,152.6 5.1,152.6 13.9,149.4 -21.3,149.4"/><polygon points="41.7,152.6 78.4,152.6 84.4,149.4 49.2,149.4"/><polygon points="115.0,152.6 151.7,152.6 154.9,149.4 119.7,149.4"/><polygon points="188.4,152.6 225.0,152.6 225.4,149.4 190.2,149.4"/><polygon points="261.7,152.6 298.3,152.6 295.9,149.4 260.7,149.4"/><polygon points="335.0,152.6 371.6,152.6 366.4,149.4 331.2,149.4"/><polygon points="408.3,152.6 444.9,152.6 436.9,149.4 401.7,149.4"/><polygon points="13.9,149.4 49.2,149.4 56.1,146.4 22.1,146.4"/><polygon points="84.4,149.4 119.7,149.4 124.0,146.4 90.0,146.4"/><polygon points="154.9,149.4 190.2,149.4 191.9,146.4 157.9,146.4"/><polygon points="225.4,149.4 260.7,149.4 259.8,146.4 225.8,146.4"/><polygon points="295.9,149.4 331.2,149.4 327.7,146.4 293.7,146.4"/><polygon points="366.4,149.4 401.7,149.4 395.6,146.4 361.6,146.4"/><polygon points="436.9,149.4 472.2,149.4 463.5,146.4 429.5,146.4"/><polygon points="-11.8,146.4 22.1,146.4 29.7,143.6 -3.0,143.6"/><polygon points="56.1,146.4 90.0,146.4 95.2,143.6 62.5,143.6"/><polygon points="124.0,146.4 157.9,146.4 160.7,143.6 128.0,143.6"/><polygon points="191.9,146.4 225.8,146.4 226.2,143.6 193.4,143.6"/><polygon points="259.8,146.4 293.7,146.4 291.7,143.6 258.9,143.6"/><polygon points="327.7,146.4 361.6,146.4 357.1,143.6 324.4,143.6"/><polygon points="395.6,146.4 429.5,146.4 422.6,143.6 389.9,143.6"/><polygon points="463.5,146.4 497.4,146.4 488.1,143.6 455.4,143.6"/><polygon points="-35.7,143.6 -3.0,143.6 5.2,141.0 -26.4,141.0"/><polygon points="29.7,143.6 62.5,143.6 68.4,141.0 36.8,141.0"/><polygon points="95.2,143.6 128.0,143.6 131.7,141.0 100.1,141.0"/><polygon points="160.7,143.6 193.4,143.6 194.9,141.0 163.3,141.0"/><polygon points="226.2,143.6 258.9,143.6 258.1,141.0 226.5,141.0"/><polygon points="291.7,143.6 324.4,143.6 321.4,141.0 289.7,141.0"/><polygon points="357.1,143.6 389.9,143.6 384.6,141.0 353.0,141.0"/><polygon points="422.6,143.6 455.4,143.6 447.8,141.0 416.2,141.0"/><polygon points="5.2,141.0 36.8,141.0 43.4,138.5 12.9,138.5"/><polygon points="68.4,141.0 100.1,141.0 104.6,138.5 74.0,138.5"/><polygon points="131.7,141.0 163.3,141.0 165.7,138.5 135.1,138.5"/><polygon points="194.9,141.0 226.5,141.0 226.8,138.5 196.3,138.5"/><polygon points="258.1,141.0 289.7,141.0 288.0,138.5 257.4,138.5"/><polygon points="321.4,141.0 353.0,141.0 349.1,138.5 318.5,138.5"/><polygon points="384.6,141.0 416.2,141.0 410.2,138.5 379.7,138.5"/><polygon points="447.8,141.0 479.4,141.0 471.3,138.5 440.8,138.5"/><polygon points="-17.7,138.5 12.9,138.5 14.6,138.0 -15.7,138.0"/><polygon points="43.4,138.5 74.0,138.5 75.3,138.0 44.9,138.0"/><polygon points="104.6,138.5 135.1,138.5 135.9,138.0 105.6,138.0"/><polygon points="165.7,138.5 196.3,138.5 196.6,138.0 166.2,138.0"/><polygon points="226.8,138.5 257.4,138.5 257.2,138.0 226.9,138.0"/><polygon points="288.0,138.5 318.5,138.5 317.9,138.0 287.6,138.0"/><polygon points="349.1,138.5 379.7,138.5 378.5,138.0 348.2,138.0"/><polygon points="410.2,138.5 440.8,138.5 439.2,138.0 408.9,138.0"/><polygon points="471.3,138.5 501.9,138.5 499.8,138.0 469.5,138.0"/></g><line x1="0" y1="230.5" x2="89" y2="168" stroke="#d0c820" stroke-width="1.3"/><line x1="234.5" y1="0" x2="234.5" y2="137.5" stroke="#e8e020" stroke-width="1.5" opacity="0.35"/><rect x="16.6" y="25.9" width="143.4" height="143.1" fill="url(#tfine1)"/><polygon points="159.0,26.0 169.0,32.0 169.0,163.0 159.0,169.5" fill="url(#tside1)"/><rect x="349.0" y="0" width="120.0" height="238.0" fill="url(#tfine2)"/><path d="M325.0,12.0 L349.0,0.0 L349.0,238.0 L340.0,237.0 L325.0,208.0 Z" fill="url(#tfine2)"/><line x1="349.0" y1="119" x2="469" y2="119" stroke="#e0e030" stroke-width="7"/></svg><text x="9" y="191.5" font-size="12.4" fill="#000" text-anchor="start" font-weight="normal" font-family="Liberation Sans" stroke="#000" stroke-width="0.3">Read5</text><text x="9" y="205.5" font-size="13.1" fill="#000" text-anchor="start" font-weight="normal" font-family="Liberation Sans" stroke="#000" stroke-width="0.3">stmap_warped.0042.exr</text><text x="9" y="222" font-size="13.8" fill="#000" text-anchor="start" font-weight="normal" font-family="Liberation Sans" stroke="#000" stroke-width="0.3">(linear)</text><text x="91" y="253" font-size="13.9" fill="#d82020" text-anchor="middle" font-weight="bold" font-family="Liberation Sans" stroke="#d82020" stroke-width="0.3">F: server</text><text x="49" y="267.70000000000005" font-size="13.4" fill="#d82020" font-weight="bold" font-family="Liberation Sans">P: n/a <tspan fill="#c82828">source</tspan></text><rect x="47.0" y="275.5" width="8.3" height="3.5" fill="#e02020"/><rect x="55.3" y="275.5" width="8.3" height="3.5" fill="#20d020"/><rect x="63.6" y="275.5" width="8.3" height="3.5" fill="#2020e0"/><rect x="126" y="275.5" width="9" height="3.5" fill="#108010"/><line x1="263.4" y1="1" x2="277" y2="23" stroke="#f4b870" stroke-width="3"/><path d="M281.5 32.0 L271.0 23.1 L279.0 18.4Z" fill="#f4b870"/><line x1="292.5" y1="160" x2="292.5" y2="182" stroke="#f4b870" stroke-width="3"/><path d="M292.5 190.0 L287.9 177.0 L297.1 177.0Z" fill="#f4b870"/><line x1="138" y1="200" x2="237" y2="200" stroke="#f4b870" stroke-width="3"/><path d="M245.5 200.0 L232.5 204.6 L232.5 195.4Z" fill="#f4b870"/><line x1="292.5" y1="212" x2="292.5" y2="265" stroke="#f4b870" stroke-width="3"/><path d="M292.5 273.0 L287.9 260.0 L297.1 260.0Z" fill="#f4b870"/><line x1="138" y1="221" x2="255" y2="269" stroke="#f4b870" stroke-width="3"/><path d="M263.0 272.5 L249.2 271.8 L252.7 263.3Z" fill="#f4b870"/><line x1="292.5" y1="297" x2="292.5" y2="312" stroke="#f4b870" stroke-width="2" stroke-dasharray="1.5,2"/><path d="M292.5 323.0 L287.9 310.0 L297.1 310.0Z" fill="#f4b870"/><rect x="245.5" y="32.5" width="94.5" height="36.5" fill="url(#gGreen)" stroke="#1a1a1a" stroke-width="1.2" rx="1"/><text x="292.7" y="49" font-size="12.8" fill="#000" text-anchor="middle" font-weight="normal" font-family="Liberation Sans" stroke="#000" stroke-width="0.3">Bezier3</text><text x="292.2" y="63.5" font-size="12.8" fill="#000" text-anchor="middle" font-weight="normal" font-family="Liberation Sans" stroke="#000" stroke-width="0.3">(alpha)</text><rect x="274" y="64.3" width="9" height="3" fill="#fff"/><path d="M340.5 51.0 L345.5 46.5 L345.5 55.5Z" fill="#f4b870"/><circle cx="341" cy="32" r="4.6" fill="#c03838" stroke="#7a2020" stroke-width="0.6"/><text x="341" y="34.6" font-size="6.5" fill="#fff" text-anchor="middle" font-weight="bold" font-family="Liberation Sans">A</text><rect x="245.5" y="78.5" width="94.5" height="36.5" fill="url(#gGreen)" stroke="#1a1a1a" stroke-width="1.2" rx="1"/><text x="292.7" y="95" font-size="12.8" fill="#000" text-anchor="middle" font-weight="normal" font-family="Liberation Sans" stroke="#000" stroke-width="0.3">Bezier2</text><text x="292.2" y="109.5" font-size="12.8" fill="#000" text-anchor="middle" font-weight="normal" font-family="Liberation Sans" stroke="#000" stroke-width="0.3">(alpha)</text><rect x="274" y="110.3" width="9" height="3" fill="#fff"/><path d="M340.5 97.0 L345.5 92.5 L345.5 101.5Z" fill="#f4b870"/><circle cx="341" cy="78" r="4.6" fill="#c03838" stroke="#7a2020" stroke-width="0.6"/><text x="341" y="80.6" font-size="6.5" fill="#fff" text-anchor="middle" font-weight="bold" font-family="Liberation Sans">A</text><rect x="245.5" y="124.5" width="94.5" height="35.5" fill="url(#gGreen)" stroke="#1a1a1a" stroke-width="1.2" rx="1"/><text x="292.7" y="141" font-size="12.8" fill="#000" text-anchor="middle" font-weight="normal" font-family="Liberation Sans" stroke="#000" stroke-width="0.3">Bezier1</text><text x="292.2" y="155.5" font-size="12.8" fill="#000" text-anchor="middle" font-weight="normal" font-family="Liberation Sans" stroke="#000" stroke-width="0.3">(alpha)</text><rect x="274" y="156.3" width="9" height="3" fill="#fff"/><path d="M340.5 143.0 L345.5 138.5 L345.5 147.5Z" fill="#f4b870"/><rect x="246.0" y="190.0" width="94.0" height="22.5" fill="#f8b868" stroke="#1a1a1a" stroke-width="1.2" rx="1"/><rect x="247" y="191" width="92" height="1" fill="#f8e8d8" opacity="0.8"/><text x="292.5" y="206.70000000000005" font-size="12.5" fill="#000" text-anchor="middle" font-weight="normal" font-family="Liberation Mono" letter-spacing="0.3" stroke="#000" stroke-width="0.3">STMap1</text><rect x="248" y="207" width="9" height="4" fill="#e02020"/><rect x="257" y="207" width="9" height="4" fill="#20d020"/><rect x="266" y="207" width="9" height="4" fill="#2020e0"/><rect x="275" y="207" width="9" height="4" fill="#ffffff"/><rect x="331" y="207.5" width="2" height="3" fill="#108010"/><path d="M340.5 200.5 L345.5 196.0 L345.5 205.0Z" fill="#f4b870"/><rect x="245.5" y="273.5" width="94.5" height="22.5" fill="url(#gBlue)" stroke="#1a1a1a" stroke-width="1.2" rx="1"/><text x="292.5" y="290" font-size="13.4" fill="#000" text-anchor="middle" font-weight="normal" font-family="Liberation Sans" stroke="#000" stroke-width="0.3">ColorCorrect1</text><rect x="248" y="290" width="9" height="4" fill="#e02020"/><rect x="257" y="290" width="9" height="4" fill="#20d020"/><rect x="266" y="290" width="9" height="4" fill="#2020e0"/><rect x="330" y="290" width="2" height="3" fill="#108010"/><path d="M248 323 L337 323 L342.5 334 L337 345.5 L248 345.5 L242.5 334Z" fill="url(#gGray)" stroke="#2a2a2a" stroke-width="1"/><path d="M240 330 L244 334 L240 338Z" fill="#000"/><text x="292.2" y="339.79999999999995" font-size="13.3" fill="#000" text-anchor="middle" font-weight="normal" font-family="Liberation Sans" stroke="#000" stroke-width="0.3">Viewer1</text><text x="292.5" y="178.5" font-size="13.3" fill="#000" text-anchor="middle" font-weight="normal" font-family="Liberation Sans" stroke="#000" stroke-width="0.3">src</text><text x="226.3" y="207" font-size="13.7" fill="#000" text-anchor="middle" font-weight="normal" font-family="Liberation Sans" stroke="#000" stroke-width="0.3">stmap</text><text x="293.5" y="261.5" font-size="13.3" fill="#000" text-anchor="middle" font-weight="normal" font-family="Liberation Sans" stroke="#000" stroke-width="0.3">mask</text><text x="292.5" y="311" font-size="12" fill="#000" text-anchor="middle" font-weight="normal" font-family="Liberation Sans" stroke="#000" stroke-width="0.3">1</text><rect x="457" y="315" width="1.2" height="60" fill="#9a9a9a"/><rect x="457" y="315" width="82" height="1.5" fill="#9a9a9a"/><rect x="458" y="316" width="3" height="3" fill="none" stroke="#bbb" stroke-width="0.8"/><rect x="460" y="324" width="10" height="0.8" fill="#bbb"/><rect x="466" y="322" width="2" height="1.5" fill="#eee"/><rect x="463.5" y="326.79999999999995" width="2" height="2" fill="#fff"/><rect x="470" y="324" width="5" height="1" fill="#7a1818"/><rect x="471" y="327" width="2" height="2" fill="#6a1010"/><rect x="472" y="331" width="1.5" height="3" fill="#5a3030"/><rect x="474" y="334" width="2" height="2" fill="#b08050"/><rect x="475" y="324" width="8" height="0.8" fill="#bbb"/><rect x="479.5" y="320" width="2" height="4" fill="#eee"/><rect x="477" y="326.79999999999995" width="2" height="2" fill="#fff"/><rect x="483" y="324" width="7" height="1" fill="#7a1818"/><rect x="484" y="327" width="2" height="2" fill="#6a1010"/><rect x="529" y="338" width="2" height="3" fill="#fff"/><rect x="535" y="337" width="2" height="3" fill="#fff"/><rect x="535" y="345" width="2" height="3" fill="#fff"/><rect x="529" y="344" width="2" height="1" fill="#888"/><rect x="470" y="358" width="10" height="8" fill="#b8a0a0"/><rect x="472" y="360" width="2" height="2" fill="#fff"/><rect x="475" y="360" width="3" height="4" fill="#eee"/><rect x="472" y="363" width="2" height="1.5" fill="#eee"/><path d="M514 340 L516.5 343 L519 340" fill="none" stroke="#ccc" stroke-width="0.8"/></svg>

</body></html>
